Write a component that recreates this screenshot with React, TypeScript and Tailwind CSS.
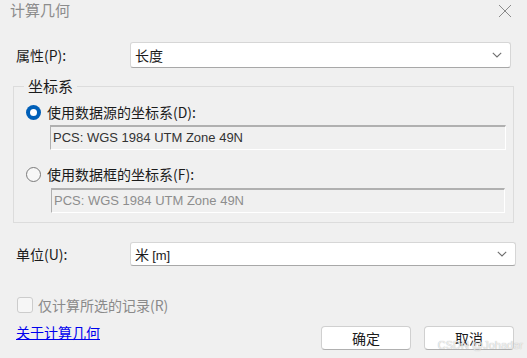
import React from "react";

function Chevron() {
  return (
    <svg width="10" height="6" viewBox="0 0 10 6" className="shrink-0">
      <path d="M0.8 0.8 L5 5 L9.2 0.8" fill="none" stroke="#6e6e6e" strokeWidth="1.1" />
    </svg>
  );
}

function Select({ value, width }: { value: React.ReactNode; width: string }) {
  return (
    <div
      className={`flex h-full items-center justify-between rounded-[3px] border border-[#d6d6d6] border-b-[#a8a8a8] bg-white pl-[4px] pr-[8px] ${width}`}
    >
      <span className="leading-none text-[#1b1b1b]">{value}</span>
      <Chevron />
    </div>
  );
}

function Radio({ checked }: { checked: boolean }) {
  if (checked) {
    return (
      <span className="flex h-[15px] w-[15px] shrink-0 items-center justify-center rounded-full bg-[#005fb8]">
        <span className="h-[7px] w-[7px] rounded-full bg-white" />
      </span>
    );
  }
  return <span className="h-[15px] w-[15px] shrink-0 rounded-full border border-[#7a7a7a] bg-[#f7f7f7]" />;
}

function ReadOnlyBox({ text, dim }: { text: string; dim?: boolean }) {
  return (
    <div
      className={`flex h-[25px] items-center border border-t-2 border-[#b0b0b0] border-b-white border-r-white bg-[#f0f0f0] pl-[2px] font-['Liberation_Sans'] text-[13px] ${
        dim ? "text-[#8d8d8d]" : "text-[#333333]"
      }`}
    >
      {text}
    </div>
  );
}

export default function App() {
  return (
    <div className="relative h-[358px] w-[527px] overflow-hidden bg-[#f0f0f0] font-['Noto_Sans_CJK_SC','Liberation_Sans',sans-serif] text-[14px] text-[#1b1b1b]">
      {/* 标题栏 */}
      <div className="flex h-[22px] items-start justify-between pl-[10px] pr-[15px] pt-[1px]">
        <span className="text-[15px] leading-[17px] text-[#8c8c8c]">计算几何</span>
        <svg width="14" height="14" viewBox="0 0 14 14" className="mt-[3px]">
          <path d="M1 1 L13 13 M13 1 L1 13" stroke="#8a8a8a" strokeWidth="1" />
        </svg>
      </div>

      {/* 属性 */}
      <div className="mt-[20px] flex h-[26px] items-center pl-[16px]">
        <span className="w-[114px]">属性(P):</span>
        <Select value="长度" width="w-[381px]" />
      </div>

      {/* 坐标系 */}
      <fieldset className="mx-[13px] mt-[8px] border border-[#dcdcdc] pb-[9px]">
        <legend className="ml-[10px] px-[4px] text-[15px] leading-[20px]">坐标系</legend>
        <div className="mt-[6px] flex h-[20px] items-center gap-[6px] pl-[12px]">
          <Radio checked />
          <span>使用数据源的坐标系(D):</span>
        </div>
        <div className="ml-[36px] mt-[3px] w-[456px]">
          <ReadOnlyBox text="PCS: WGS 1984 UTM Zone 49N" />
        </div>
        <div className="mt-[14px] flex h-[20px] items-center gap-[6px] pl-[12px]">
          <Radio checked={false} />
          <span>使用数据框的坐标系(F):</span>
        </div>
        <div className="ml-[37px] mt-[4px] w-[454px]">
          <ReadOnlyBox text="PCS: WGS 1984 UTM Zone 49N" dim />
        </div>
      </fieldset>

      {/* 单位 */}
      <div className="mt-[19px] flex h-[24px] items-center pl-[16px]">
        <span className="w-[114px]">单位(U):</span>
        <Select
          value={
            <>
              米 <span className="font-['Liberation_Sans'] text-[13px]">[m]</span>
            </>
          }
          width="w-[386px]"
        />
      </div>

      {/* 选项 */}
      <div className="mt-[29px] flex h-[20px] items-center gap-[5px] pl-[17px] text-[#8a8a8a]">
        <span className="h-[16px] w-[16px] rounded-[3px] border border-[#cccccc] bg-[#f6f6f6]" />
        <span>仅计算所选的记录(R)</span>
      </div>

      <div className="mt-[9px] flex items-start justify-between pl-[16px] pr-[13px]">
        <a href="#" className="leading-[16px] text-[#0000ee] underline">
          关于计算几何
        </a>
        <div className="mt-[2px] flex gap-[13px]">
          <button className="h-[24px] w-[90px] rounded-[4px] border border-[#d0d0d0] border-b-[#b0b0b0] bg-white">
            确定
          </button>
          <button className="h-[24px] w-[90px] rounded-[4px] border border-[#d0d0d0] border-b-[#b0b0b0] bg-white">
            取消
          </button>
        </div>
      </div>

      <span className="absolute bottom-[5px] right-[4px] font-['Liberation_Sans'] text-[11px] text-white/80 [text-shadow:0_0_1px_#9a9a9a]">
        CSDN @Johader
      </span>
    </div>
  );
}
